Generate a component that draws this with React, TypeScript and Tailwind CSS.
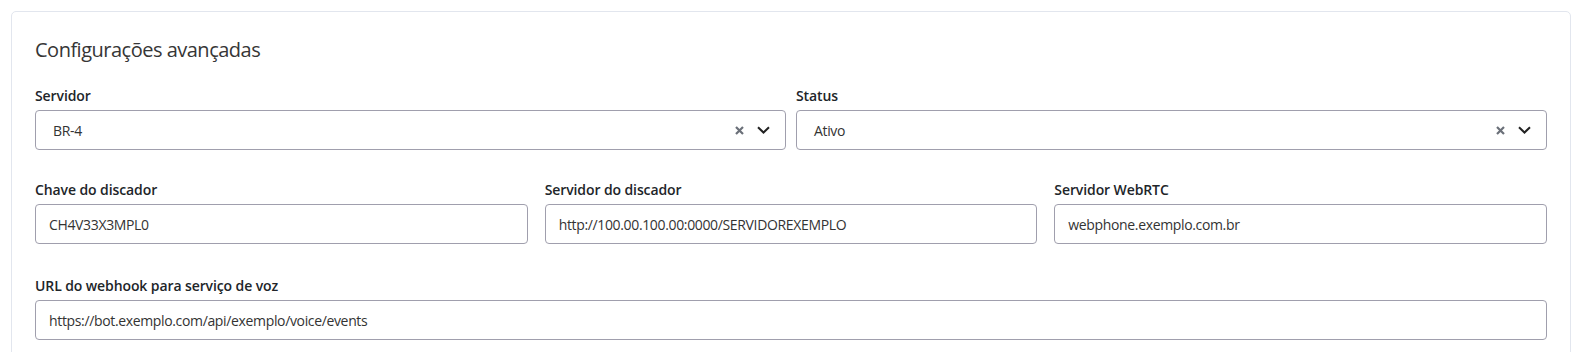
import React from 'react';

const fieldBox =
  'h-[40px] w-full rounded-[4px] border border-[#a09fad] bg-white flex items-center text-[14px] tracking-[-0.35px] text-[#333]';

const Label: React.FC<{ children: React.ReactNode }> = ({ children }) => (
  <label className="block h-[23px] mb-[3px] text-[14px] leading-[24px] font-semibold tracking-[-0.1px] text-[#212529]">
    {children}
  </label>
);

const ClearIcon = () => (
  <svg width="9" height="9" viewBox="0 0 9 9" className="text-[#6b7079]">
    <path d="M1 1 L8 8 M8 1 L1 8" stroke="currentColor" strokeWidth="2.2" strokeLinecap="butt" />
  </svg>
);

const Chevron = () => (
  <svg width="13" height="8" viewBox="0 0 13 8" className="text-[#222]">
    <path d="M1 1.2 L6.5 6.5 L12 1.2" stroke="currentColor" strokeWidth="2" fill="none" />
  </svg>
);

const SelectField: React.FC<{ label: string; value: string }> = ({ label, value }) => (
  <div>
    <Label>{label}</Label>
    <div className={`${fieldBox} pl-[17px] pr-[15px]`}>
      <span className="flex-1">{value}</span>
      <div className="flex items-center gap-[13px]">
        <ClearIcon />
        <Chevron />
      </div>
    </div>
  </div>
);

const TextField: React.FC<{ label: string; value: string }> = ({ label, value }) => (
  <div>
    <Label>{label}</Label>
    <input
      readOnly
      value={value}
      className={`${fieldBox} px-[13px] outline-none`}
    />
  </div>
);

export default function App() {
  return (
    <div
      className="bg-white min-h-[352px] pt-[11px] pl-[11px] pr-[2px]"
      style={{ fontFamily: '"Open Sans", "Liberation Sans", sans-serif' }}
    >
      <div className="border border-[#e2e6ee] rounded-[5px] bg-white px-[23px] pt-[24px] pb-[24px]">
        <h2 className="text-[20px] leading-[28px] font-normal tracking-[-0.5px] text-[#363636]">Configurações avançadas</h2>

        <div className="mt-[20px] grid grid-cols-2 gap-x-[10px]">
          <SelectField label="Servidor" value="BR-4" />
          <SelectField label="Status" value="Ativo" />
        </div>

        <div className="mt-[28px] grid grid-cols-3 gap-x-[17px]">
          <TextField label="Chave do discador" value="CH4V33X3MPL0" />
          <TextField label="Servidor do discador" value="http://100.00.100.00:0000/SERVIDOREXEMPLO" />
          <TextField label="Servidor WebRTC" value="webphone.exemplo.com.br" />
        </div>

        <div className="mt-[30px]">
          <TextField label="URL do webhook para serviço de voz" value="https://bot.exemplo.com/api/exemplo/voice/events" />
        </div>
      </div>
    </div>
  );
}
